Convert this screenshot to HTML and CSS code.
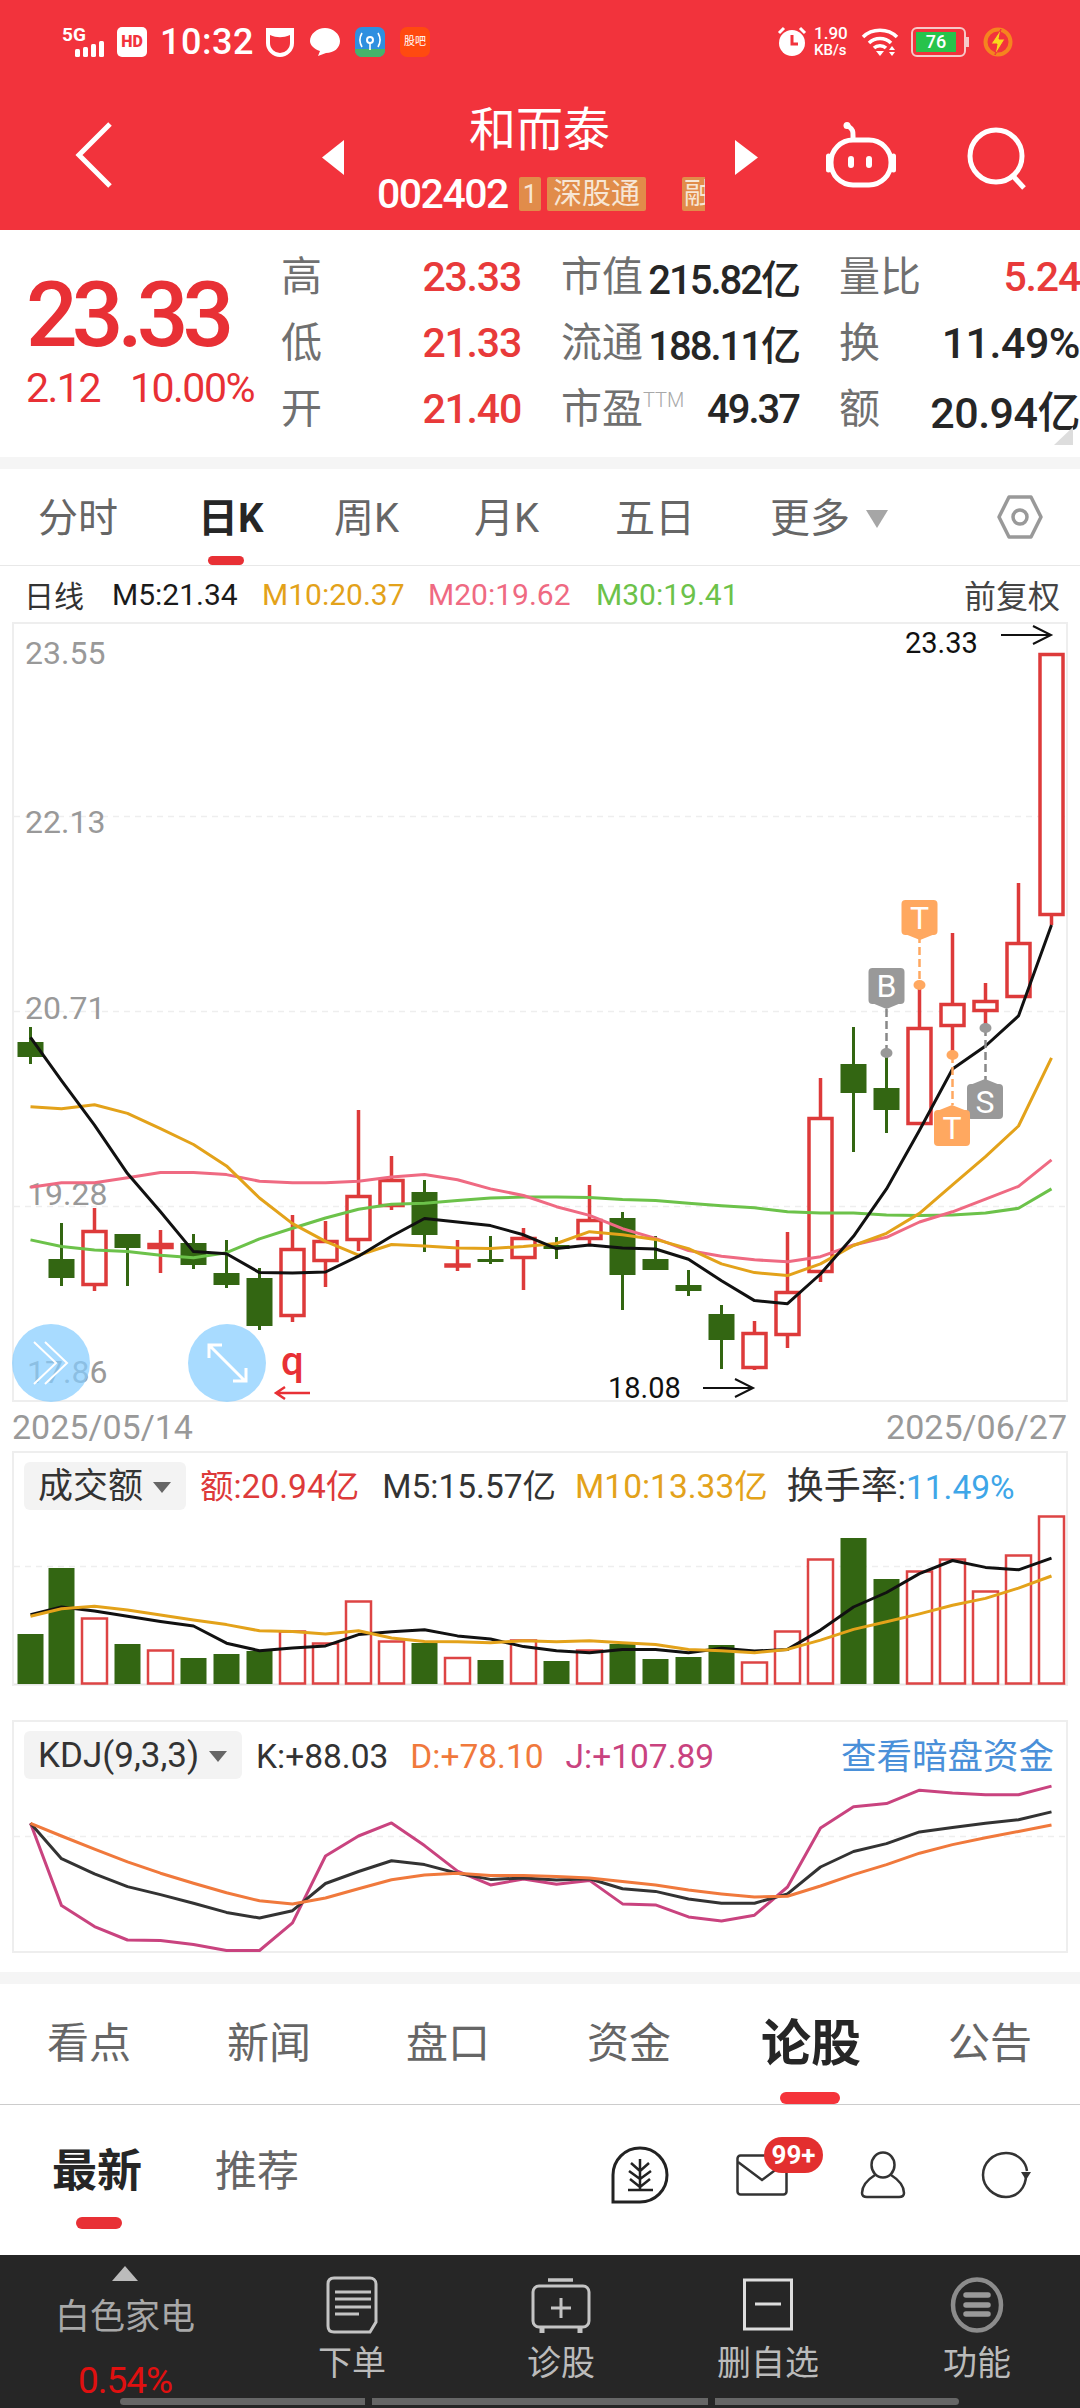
FILE: index.html
```html
<!DOCTYPE html>
<html lang="zh-CN">
<head>
    <meta charset="UTF-8">
    <meta name="viewport" content="width=device-width, initial-scale=1.0">
    <title>和而泰 002402</title>
    <link rel="stylesheet" href="styles.css">
</head>
<body>
    <div id="page">
        <!-- red header -->
        <header class="header">
            <div class="status-bar">
                <svg class="st-signal" width="48" height="30" viewBox="0 0 48 30">
                    <text x="0" y="14" class="st-5g">5G</text>
                    <rect x="13" y="22" width="5" height="8" rx="1.5" fill="#fff"/>
                    <rect x="21" y="20" width="5" height="10" rx="1.5" fill="#fff"/>
                    <rect x="29" y="17" width="5" height="13" rx="1.5" fill="#fff"/>
                    <rect x="37" y="14" width="5" height="16" rx="1.5" fill="#fff"/>
                </svg>
                <span class="st-hd">HD</span>
                <span class="st-time">10:32</span>
                <svg class="st-icon" width="30" height="30" viewBox="0 0 30 30">
                    <path d="M3 3H27V16C27 23 21 28 15 28S3 23 3 16Z" fill="none" stroke="#fff" stroke-width="4"/>
                    <path d="M5 5H25V8C18 11 12 11 5 8Z" fill="#fff"/>
                </svg>
                <svg class="st-icon" width="30" height="30" viewBox="0 0 30 30">
                    <path d="M15 1C23 1 30 7 30 14S24 26 16 26L8 29L10 24C4 22 0 18 0 14C0 7 7 1 15 1Z" fill="#fff"/>
                </svg>
                <svg class="st-icon" width="30" height="30" viewBox="0 0 30 30">
                    <rect width="30" height="30" rx="7" fill="#2f8fe0"/>
                    <path d="M0 22H30V23C30 27 27 30 23 30H7C3 30 0 27 0 23Z" fill="#45b46a"/>
                    <circle cx="15" cy="13" r="3" fill="none" stroke="#fff" stroke-width="2"/>
                    <path d="M15 16V23M7 6C4 11 4 15 7 20M23 6C26 11 26 15 23 20" fill="none" stroke="#fff" stroke-width="1.6"/>
                </svg>
                <span class="st-guba">股吧</span>
                <svg class="st-icon st-alarm" width="30" height="30" viewBox="0 0 30 30">
                    <circle cx="15" cy="16" r="13" fill="#fff"/>
                    <path d="M2 6L7 1M28 6L23 1" stroke="#fff" stroke-width="3"/>
                    <path d="M15 8V17H21" fill="none" stroke="#f2333c" stroke-width="3"/>
                </svg>
                <div class="st-speed"><span>1.90</span><span>KB/s</span></div>
                <svg class="st-wifi" width="38" height="28" viewBox="0 0 38 28">
                    <path d="M2 9C11 0 27 0 36 9M8 15C14 9 24 9 30 15M13 20C16 17 22 17 25 20" fill="none" stroke="#fff" stroke-width="3.5"/>
                    <path d="M19 28L15 23H23Z" fill="#fff"/>
                    <path d="M31 18L34 22H28ZM31 28L28 24H34Z" fill="#fff"/>
                </svg>
                <div class="st-battery"><span class="st-battery-fill">76</span></div>
                <svg class="st-icon st-bolt" width="30" height="30" viewBox="0 0 30 30">
                    <circle cx="15" cy="15" r="12.5" fill="none" stroke="#f5841f" stroke-width="4"/>
                    <path d="M18 2L8 17H14L12 28L22 12H16Z" fill="#f9d71c" stroke="#f2333c" stroke-width="1"/>
                </svg>
            </div>
            <div class="nav-row">
                <svg class="nav-back" width="37" height="66" viewBox="0 0 37 66">
                    <path d="M34 2L3 33L34 64" fill="none" stroke="#fff" stroke-width="5"/>
                </svg>
                <div class="nav-mid">
                    <svg class="nav-tri" width="22" height="35" viewBox="0 0 22 35"><path d="M22 0V35L0 17.5Z" fill="#fff"/></svg>
                    <div class="nav-title">
                        <div class="stock-name">和而泰</div>
                        <div class="stock-code-row">
                            <span class="stock-code">002402</span>
                            <span class="code-tag tag-one">1</span>
                            <span class="code-tag tag-sz">深股通</span>
                            <span class="code-tag tag-cut">融</span>
                        </div>
                    </div>
                    <svg class="nav-tri" width="23" height="35" viewBox="0 0 23 35"><path d="M0 0V35L23 17.5Z" fill="#fff"/></svg>
                </div>
                <svg class="nav-robot" width="70" height="66" viewBox="0 0 70 66">
                    <path d="M27 17C27 10 28 8 22 4" fill="none" stroke="#fff" stroke-width="5"/>
                    <circle cx="21" cy="3.5" r="3.5" fill="#fff"/>
                    <rect x="5" y="18" width="60" height="45" rx="22" fill="none" stroke="#fff" stroke-width="5"/>
                    <path d="M2.500 34V48M67.500 34V48" stroke="#fff" stroke-width="5" stroke-linecap="round"/>
                    <path d="M25 37V43M43 37V43" stroke="#fff" stroke-width="6" stroke-linecap="round"/>
                </svg>
                <svg class="nav-search" width="60" height="62" viewBox="0 0 60 62">
                    <ellipse cx="29" cy="29" rx="26" ry="26" fill="none" stroke="#fff" stroke-width="5"/>
                    <path d="M46 49L57 61" stroke="#fff" stroke-width="5"/>
                </svg>
            </div>
        </header>

        <!-- price block -->
        <section class="quote">
            <div class="quote-main">
                <div class="price">23.33</div>
                <div class="price-change"><span>2.12</span><span>10.00%</span></div>
            </div>
            <div class="quote-grid">
                <div class="cell"><span class="lbl">高</span><span class="val red">23.33</span></div>
                <div class="cell"><span class="lbl">市值</span><span class="val">215.82亿</span></div>
                <div class="cell"><span class="lbl">量比</span><span class="val red">5.24</span></div>
                <div class="cell"><span class="lbl">低</span><span class="val red">21.33</span></div>
                <div class="cell"><span class="lbl">流通</span><span class="val">188.11亿</span></div>
                <div class="cell"><span class="lbl">换</span><span class="val wide">11.49%</span></div>
                <div class="cell"><span class="lbl">开</span><span class="val red">21.40</span></div>
                <div class="cell"><span class="lbl">市盈<sup class="ttm">TTM</sup></span><span class="val">49.37</span></div>
                <div class="cell"><span class="lbl">额</span><span class="val wide">20.94亿</span></div>
            </div>
            <span class="quote-corner"></span>
        </section>
        <div class="band band-top"></div>

        <!-- period tabs -->
        <nav class="period-tabs">
            <span class="period">分时</span>
            <span class="period active">日K</span>
            <span class="period">周K</span>
            <span class="period">月K</span>
            <span class="period">五日</span>
            <span class="period">更多<i class="more-tri"></i></span>
            <svg class="hex" width="46" height="46" viewBox="0 0 46 46">
                <path d="M12 3H34L44 23L34 43H12L2 23Z" fill="none" stroke="#999" stroke-width="3.500" stroke-linejoin="round"/>
                <circle cx="23" cy="23" r="7" fill="none" stroke="#999" stroke-width="3.500"/>
            </svg>
        </nav>
        <div class="ma-legend">
            <span class="ma-name">日线</span>
            <span class="ma-black">M5:21.34</span>
            <span class="ma-orange">M10:20.37</span>
            <span class="ma-pink">M20:19.62</span>
            <span class="ma-green">M30:19.41</span>
            <span class="ma-adjust">前复权</span>
        </div>

        <!-- k line -->
        <svg class="chart-main" width="1080" height="780" viewBox="0 622 1080 780">
            <rect x="13" y="623" width="1054" height="778" class="frame"/>
            <path d="M14 816.500H1066M14 1011.500H1066M14 1206.500H1066" class="grid-line"/>
            <text x="25" y="664" class="axis">23.55</text>
            <text x="25" y="833" class="axis">22.13</text>
            <text x="25" y="1019" class="axis">20.71</text>
            <text x="27" y="1205" class="axis">19.28</text>
            <text x="27" y="1383" class="axis">17.86</text>

            <g class="k-down">
                <path d="M30.500 1027V1064M61.500 1223V1286M127.500 1234V1286M193.500 1234V1269M226.500 1240V1288M259.500 1268V1330M424.500 1180V1252M490.500 1236V1264M556.500 1237V1259M622.500 1212V1310M655.500 1236V1270M688.500 1270V1296M721.500 1305V1369M853.500 1027V1152M886.500 1053V1133"/>
                <rect x="17.500" y="1042" width="26" height="15"/>
                <rect x="48.500" y="1259" width="26" height="19"/>
                <rect x="114.500" y="1234" width="26" height="14"/>
                <rect x="180.500" y="1243" width="26" height="22"/>
                <rect x="213.500" y="1273" width="26" height="12"/>
                <rect x="246.500" y="1278" width="26" height="48"/>
                <rect x="411.500" y="1192" width="26" height="43"/>
                <rect x="477.500" y="1259" width="26" height="3"/>
                <rect x="543.500" y="1245" width="26" height="4"/>
                <rect x="609.500" y="1218" width="26" height="57"/>
                <rect x="642.500" y="1259" width="26" height="11"/>
                <rect x="675.500" y="1285" width="26" height="6"/>
                <rect x="708.500" y="1314" width="26" height="26"/>
                <rect x="840.500" y="1064" width="26" height="29"/>
                <rect x="873.500" y="1088" width="26" height="22"/>
            </g>
            <g class="k-up">
                <path d="M94.500 1208V1291M160.500 1230V1273M292.500 1215V1322M325.500 1221V1287M358.500 1110V1251M391.500 1156V1210M457.500 1240V1271M523.500 1228V1290M589.500 1185V1245M754.500 1321V1370M787.500 1232V1348M820.500 1078V1282M919.500 985V1125M952.500 933V1056M985.500 983V1028M1018.500 883V998M1051.500 653V925"/>
                <rect x="83" y="1231.500" width="23" height="53"/>
                <rect x="149" y="1244.500" width="23" height="3"/>
                <rect x="281" y="1249.500" width="23" height="66"/>
                <rect x="314" y="1241.500" width="23" height="19"/>
                <rect x="347" y="1196.500" width="23" height="43"/>
                <rect x="380" y="1180.500" width="23" height="25"/>
                <rect x="446" y="1265" width="23" height="1"/>
                <rect x="512" y="1238.500" width="23" height="19"/>
                <rect x="578" y="1220.500" width="23" height="18"/>
                <rect x="743" y="1333.500" width="23" height="34"/>
                <rect x="776" y="1292.500" width="23" height="42"/>
                <rect x="809" y="1118.500" width="23" height="153"/>
                <rect x="908" y="1028.500" width="23" height="95"/>
                <rect x="941" y="1004.500" width="23" height="21"/>
                <rect x="974" y="1001.500" width="23" height="9"/>
                <rect x="1007" y="943.500" width="23" height="53"/>
                <rect x="1040" y="654.500" width="23" height="260"/>
            </g>

            <polyline class="line l-green" points="30.500,1239.900 61.500,1246.500 94.500,1250.100 127.500,1251.600 160.500,1255.200 193.500,1257.800 226.500,1252.700 259.500,1238.900 292.500,1228.200 325.500,1218 358.500,1209.300 391.500,1204.200 424.500,1203.200 457.500,1200.600 490.500,1198 523.500,1197 556.500,1197 589.500,1197.600 622.500,1199.600 655.500,1200.600 688.500,1203.200 721.500,1205.700 754.500,1207.800 787.500,1211.800 820.500,1212.900 853.500,1212.900 886.500,1214.900 919.500,1215.400 952.500,1214.900 985.500,1212.900 1018.500,1208.300 1051.500,1188.900"/>
            <polyline class="line l-pink" points="30.500,1187.300 61.500,1182.800 94.500,1182.800 127.500,1177.700 160.500,1172.600 193.500,1172.600 226.500,1174.600 259.500,1181.200 292.500,1182.800 325.500,1182.800 358.500,1181.200 391.500,1177.100 424.500,1174.600 457.500,1179.700 490.500,1188.900 523.500,1195.500 556.500,1206.700 589.500,1215.400 622.500,1228.700 655.500,1238.400 688.500,1250.600 721.500,1256.200 754.500,1259.800 787.500,1261.800 820.500,1256.700 853.500,1245 886.500,1237.300 919.500,1222 952.500,1211.800 985.500,1199.100 1018.500,1186.300 1051.500,1159.800"/>
            <polyline class="line l-orange" points="30.500,1106.700 61.500,1108.800 94.500,1104.700 127.500,1113.400 160.500,1128.700 193.500,1144.500 226.500,1165.900 259.500,1198 292.500,1223.600 325.500,1241.400 358.500,1255.200 391.500,1244.500 424.500,1246 457.500,1248 490.500,1248.600 523.500,1246.500 556.500,1243.500 589.500,1231.700 622.500,1234.800 655.500,1239.400 688.500,1248.600 721.500,1263.900 754.500,1272.600 787.500,1275.600 820.500,1263.900 853.500,1245.500 886.500,1233.300 919.500,1213.400 952.500,1184.800 985.500,1156.700 1018.500,1126 1051.500,1057.800"/>
            <polyline class="line l-black" points="30.500,1037.300 61.500,1080.700 94.500,1125.100 127.500,1173.600 160.500,1211.800 193.500,1251.600 226.500,1253.700 259.500,1272.600 292.500,1273 325.500,1272 358.500,1256.200 391.500,1236.300 424.500,1218.500 457.500,1222 490.500,1225.600 523.500,1234.800 556.500,1248.600 589.500,1245 622.500,1248 655.500,1249 688.500,1259.300 721.500,1280.700 754.500,1300.600 787.500,1303.700 820.500,1274 853.500,1236.300 886.500,1188.900 919.500,1130.200 952.500,1069 985.500,1046 1018.500,1015.900 1051.500,925.100"/>

            <!-- trade markers -->
            <path d="M886.500 1009V1053M985.500 1028V1084" class="mark-dash-gray"/>
            <path d="M919.500 935V985M952.500 1055V1105" class="mark-dash-orange"/>
            <ellipse cx="886.500" cy="1053" rx="6" ry="5" class="mark-gray"/>
            <ellipse cx="985.500" cy="1028" rx="6" ry="5" class="mark-gray"/>
            <ellipse cx="919.500" cy="985" rx="6" ry="5" class="mark-orange"/>
            <ellipse cx="952.500" cy="1055" rx="6" ry="5" class="mark-orange"/>
            <path d="M872 1003H901L886.500 1009Z" class="mark-gray"/>
            <rect x="868.500" y="968" width="36" height="36" rx="4" class="mark-gray"/>
            <text x="886.500" y="997" class="mark-text">B</text>
            <path d="M905 934H935L920 940Z" class="mark-orange"/>
            <rect x="901.500" y="900" width="36" height="35" rx="4" class="mark-orange"/>
            <text x="919.500" y="929" class="mark-text">T</text>
            <path d="M970 1085H1000L985 1079Z" class="mark-gray"/>
            <rect x="967" y="1084" width="36" height="35" rx="4" class="mark-gray"/>
            <text x="985" y="1113" class="mark-text">S</text>
            <path d="M937 1111H967L952 1105Z" class="mark-orange"/>
            <rect x="934" y="1110" width="36" height="36" rx="4" class="mark-orange"/>
            <text x="952" y="1139" class="mark-text">T</text>

            <!-- high / low notes -->
            <text x="905" y="653" class="note">23.33</text>
            <path d="M1001 635H1051M1033 626L1051 635L1033 644" class="note-arrow"/>
            <text x="608" y="1398" class="note">18.08</text>
            <path d="M703 1388H753M735 1379L753 1388L735 1397" class="note-arrow"/>

            <!-- floating buttons -->
            <circle cx="51" cy="1363" r="39" class="float-btn"/>
            <path d="M34 1342L56 1363L34 1384M45 1342L67 1363L45 1384" class="float-stroke thin"/>
            <circle cx="227" cy="1363" r="39" class="float-btn"/>
            <path d="M210 1346L245 1381M209 1358V1345H222M246 1368V1381H233" class="float-stroke"/>
            <text x="281" y="1375" class="q-mark">q</text>
            <path d="M310 1393H276M285 1387L276 1393L285 1399" class="q-arrow"/>
        </svg>

        <div class="date-row"><span>2025/05/14</span><span>2025/06/27</span></div>

        <!-- volume -->
        <section class="sub-panel vol-panel">
            <div class="sub-head">
                <span class="pill pill-vol">成交额<i class="pill-tri"></i></span>
                <span class="t-red">额:20.94亿</span>
                <span class="t-dark">M5:15.57亿</span>
                <span class="t-orange vol-m10">M10:13.33亿</span>
                <span class="t-dark vol-turn"><em class="head-cjk">换手率</em>:<b class="t-blue">11.49%</b></span>
            </div>
            <svg class="vol-svg" width="1052" height="173" viewBox="14 1513 1052 173">
                <path d="M14 1566.500H1066" class="grid-line"/>
                <path d="M14 1684.500H1066" class="base-line"/>
                <g class="v-down">
                    <rect x="17.500" y="1634" width="26" height="50"/>
                    <rect x="48.500" y="1568" width="26" height="116"/>
                    <rect x="114.500" y="1644" width="26" height="40"/>
                    <rect x="180.500" y="1658" width="26" height="26"/>
                    <rect x="213.500" y="1654" width="26" height="30"/>
                    <rect x="246.500" y="1651" width="26" height="33"/>
                    <rect x="411.500" y="1643" width="26" height="41"/>
                    <rect x="477.500" y="1660" width="26" height="24"/>
                    <rect x="543.500" y="1661" width="26" height="23"/>
                    <rect x="609.500" y="1644" width="26" height="40"/>
                    <rect x="642.500" y="1659" width="26" height="25"/>
                    <rect x="675.500" y="1657" width="26" height="27"/>
                    <rect x="708.500" y="1645" width="26" height="39"/>
                    <rect x="840.500" y="1538" width="26" height="146"/>
                    <rect x="873.500" y="1579" width="26" height="105"/>
                </g>
                <g class="v-up">
                    <rect x="82" y="1618.500" width="25" height="65"/>
                    <rect x="148" y="1650.500" width="25" height="33"/>
                    <rect x="280" y="1631.500" width="25" height="52"/>
                    <rect x="313" y="1643.500" width="25" height="40"/>
                    <rect x="346" y="1601.500" width="25" height="82"/>
                    <rect x="379" y="1641.500" width="25" height="42"/>
                    <rect x="445" y="1658" width="25" height="25.500"/>
                    <rect x="511" y="1640.500" width="25" height="43"/>
                    <rect x="577" y="1650.500" width="25" height="33"/>
                    <rect x="742" y="1662.500" width="25" height="21"/>
                    <rect x="775" y="1631.500" width="25" height="52"/>
                    <rect x="808" y="1559.500" width="25" height="124"/>
                    <rect x="907" y="1571.500" width="25" height="112"/>
                    <rect x="940" y="1559.500" width="25" height="124"/>
                    <rect x="973" y="1591.500" width="25" height="92"/>
                    <rect x="1006" y="1555.500" width="25" height="128"/>
                    <rect x="1039" y="1516.500" width="25" height="167"/>
                </g>
                <polyline class="line l-black" points="30.500,1614.600 61.500,1607 94.500,1611.100 127.500,1616.300 160.500,1621.500 193.500,1626 226.500,1643.200 259.500,1650.700 292.500,1648 325.500,1645.900 358.500,1634.600 391.500,1631.800 424.500,1629.700 457.500,1635.900 490.500,1639 523.500,1646.600 556.500,1650.700 589.500,1652.800 622.500,1649.400 655.500,1649.400 688.500,1652.800 721.500,1648.300 754.500,1651.100 787.500,1649.400 820.500,1630.100 853.500,1607 886.500,1592.500 919.500,1573.600 952.500,1560.500 985.500,1567.400 1018.500,1569.800 1051.500,1558.100"/>
                <polyline class="line l-orange" points="30.500,1616.300 61.500,1608.700 94.500,1606.300 127.500,1610.100 160.500,1614.900 193.500,1620.100 226.500,1624.600 259.500,1630.800 292.500,1631.500 325.500,1633.900 358.500,1630.800 391.500,1638 424.500,1641.400 457.500,1641.800 490.500,1642.800 523.500,1640.800 556.500,1641.800 589.500,1640.800 622.500,1642.800 655.500,1644.500 688.500,1649.400 721.500,1650.700 754.500,1652.800 787.500,1649.400 820.500,1640.100 853.500,1629.400 886.500,1621.800 919.500,1613.900 952.500,1605.300 985.500,1598.400 1018.500,1588.100 1051.500,1576"/>
            </svg>
        </section>

        <!-- kdj -->
        <section class="sub-panel kdj-panel">
            <div class="sub-head">
                <span class="pill pill-kdj">KDJ(9,3,3)<i class="pill-tri"></i></span>
                <span class="t-dark">K:+88.03</span>
                <span class="t-coral">D:+78.10</span>
                <span class="t-magenta">J:+107.89</span>
                <span class="t-link">查看暗盘资金</span>
            </div>
            <svg class="kdj-svg" width="1052" height="169" viewBox="14 1782 1052 169">
                <path d="M14 1836.500H1066" class="grid-line"/>
                <polyline class="line l-magenta" points="30.500,1823.300 61.500,1905.600 94.500,1926.600 127.500,1940 160.500,1940.400 193.500,1944.500 226.500,1950.500 259.500,1950.500 292.500,1922.800 325.500,1856 358.500,1836 391.500,1822.900 424.500,1845.600 457.500,1871.100 490.500,1884.900 523.500,1879 556.500,1884.200 589.500,1880.400 622.500,1903.900 655.500,1904.900 688.500,1916.900 721.500,1921 754.500,1915.200 787.500,1887 820.500,1828.100 853.500,1806.700 886.500,1803.600 919.500,1790.200 952.500,1793 985.500,1794.700 1018.500,1794.700 1051.500,1786.100"/>
                <polyline class="line l-kline" points="30.500,1823.300 61.500,1858.700 94.500,1873.900 127.500,1886.600 160.500,1894.600 193.500,1903.200 226.500,1912.400 259.500,1918 292.500,1910.700 325.500,1883.500 358.500,1871.500 391.500,1860.800 424.500,1864.600 457.500,1873.200 490.500,1879.400 523.500,1878 556.500,1880.100 589.500,1878.700 622.500,1888.700 655.500,1891.400 688.500,1899 721.500,1903.200 754.500,1903.200 787.500,1893.900 820.500,1867 853.500,1851.500 886.500,1843.600 919.500,1831.900 952.500,1827.400 985.500,1823.300 1018.500,1819.800 1051.500,1811.900"/>
                <polyline class="line l-coral" points="30.500,1823.300 61.500,1836 94.500,1849.100 127.500,1861.800 160.500,1873.200 193.500,1883.200 226.500,1892.800 259.500,1900.800 292.500,1903.900 325.500,1898 358.500,1888.700 391.500,1879.700 424.500,1874.900 457.500,1873.200 490.500,1875.600 523.500,1875.600 556.500,1876.600 589.500,1878 622.500,1881.500 655.500,1884.900 688.500,1890.100 721.500,1893.900 754.500,1897 787.500,1896.300 820.500,1886 853.500,1874.600 886.500,1864.600 919.500,1853.200 952.500,1844.600 985.500,1837.700 1018.500,1831.500 1051.500,1825"/>
            </svg>
        </section>
        <div class="band band-mid"></div>

        <!-- news tabs -->
        <nav class="news-tabs">
            <span>看点</span>
            <span>新闻</span>
            <span>盘口</span>
            <span>资金</span>
            <span class="active">论股</span>
            <span>公告</span>
        </nav>
        <div class="feed-row">
            <span class="feed-tab active">最新</span>
            <span class="feed-tab">推荐</span>
            <svg class="feed-leaf" width="58" height="58" viewBox="0 0 58 58">
                <path d="M2 56V29C2 14 14 2 29 2S56 14 56 29S44 56 29 56Z" fill="none" stroke="#222" stroke-width="3"/>
                <path d="M29 13V44M17 44H42M29 25L20 17M29 25L38 17M29 33L18 25M29 33L40 25M29 41L19 33M29 41L39 33" fill="none" stroke="#222" stroke-width="2.500"/>
            </svg>
            <div class="feed-mail">
                <svg width="52" height="42" viewBox="0 0 52 42">
                    <rect x="1.500" y="1.500" width="49" height="39" rx="3" fill="none" stroke="#333" stroke-width="2.500"/>
                    <path d="M2 8L26 26L50 8" fill="none" stroke="#333" stroke-width="2.500"/>
                </svg>
                <span class="mail-badge">99+</span>
            </div>
            <svg class="feed-user" width="46" height="48" viewBox="0 0 46 48">
                <ellipse cx="23" cy="14" rx="11.500" ry="12.500" fill="none" stroke="#333" stroke-width="2.500"/>
                <path d="M15 24C7 29 2 36 2 42C2 45 4 46 7 46H39C42 46 44 45 44 42C44 36 39 29 31 24" fill="none" stroke="#333" stroke-width="2.500"/>
            </svg>
            <svg class="feed-refresh" width="52" height="48" viewBox="0 0 52 48">
                <path d="M46 24C46 36 38 46 26 46S3 36 3 24S13 2 26 2C38 2 46 11 47 20" fill="none" stroke="#333" stroke-width="2.500"/>
                <path d="M41 21H51L46 29Z" fill="#333"/>
            </svg>
        </div>

        <!-- dark bottom bar -->
        <footer class="bottom-bar">
            <div class="bar-items">
                <div class="bar-sector">
                    <i class="sector-tri"></i>
                    <span class="sector-name">白色家电</span>
                    <span class="sector-pct">0.54%</span>
                </div>
                <div class="bar-item">
                    <svg width="52" height="58" viewBox="0 0 52 58">
                        <path d="M8 2H44C47 2 50 4 50 8V46L44 56H8C4 56 2 54 2 50V8C2 4 4 2 8 2Z" fill="none" stroke="#c4c4c4" stroke-width="3"/>
                        <path d="M9 16H45M9 23H45M9 31H45M9 38H33" stroke="#c4c4c4" stroke-width="3"/>
                    </svg>
                    <span>下单</span>
                </div>
                <div class="bar-item">
                    <svg width="60" height="58" viewBox="0 0 60 58">
                        <path d="M17 4H42" stroke="#c4c4c4" stroke-width="3.500"/>
                        <rect x="2" y="10" width="56" height="41" rx="6" fill="none" stroke="#c4c4c4" stroke-width="3"/>
                        <path d="M30 22V42M20 32H40" stroke="#c4c4c4" stroke-width="3"/>
                        <path d="M11 51V57M49 51V57" stroke="#c4c4c4" stroke-width="5"/>
                    </svg>
                    <span>诊股</span>
                </div>
                <div class="bar-item">
                    <svg width="50" height="58" viewBox="0 0 50 58">
                        <rect x="1.500" y="4" width="47" height="49" fill="none" stroke="#ddd" stroke-width="3"/>
                        <path d="M12 28H38" stroke="#ddd" stroke-width="3"/>
                    </svg>
                    <span>删自选</span>
                </div>
                <div class="bar-item">
                    <svg width="54" height="58" viewBox="0 0 54 58">
                        <ellipse cx="27" cy="29" rx="24" ry="25.500" fill="none" stroke="#8c8c8c" stroke-width="4.500"/>
                        <path d="M16 19H38M16 29H38M16 38H38" stroke="#9a9a9a" stroke-width="5.500" stroke-linecap="round"/>
                    </svg>
                    <span>功能</span>
                </div>
            </div>
            <div class="bar-scroll">
                <i class="seg seg-first"></i>
                <i class="seg"></i>
                <i class="seg seg-last"></i>
            </div>
        </footer>
    </div>
</body>
</html>
```

FILE: styles.css
```css
* {
    box-sizing: border-box;
}
html, body {
    margin: 0;
    padding: 0;
    background-color: #ffffff;
}
body {
    font-family: Roboto, "Noto Sans CJK SC", sans-serif;
    color: #333333;
}
#page {
    width: 1080px;
    height: 2408px;
    overflow: hidden;
}
svg {
    display: block;
    flex-shrink: 0;
    overflow: visible;
}
i, em {
    display: block;
    font-style: normal;
}

/* header */
.header {
    height: 230px;
    background-color: #f2333c;
    color: #ffffff;
}
.status-bar {
    display: flex;
    align-items: center;
    height: 84px;
    padding-left: 62px;
}
.st-signal {
    margin-right: 7px;
}
.st-5g {
    font-size: 19px;
    font-weight: 700;
    fill: #ffffff;
}
.st-hd {
    width: 30px;
    height: 30px;
    border-radius: 5px;
    background-color: #ffffff;
    color: #f2333c;
    font-size: 16px;
    font-weight: 900;
    line-height: 30px;
    text-align: center;
}
.st-time {
    width: 92px;
    margin: 0 13px;
    font-size: 36px;
    font-weight: 500;
    line-height: 40px;
    letter-spacing: 0.5px;
}
.st-icon {
    margin-right: 15px;
}
.st-guba {
    width: 30px;
    height: 30px;
    border-radius: 7px;
    background-color: #ff4a10;
    font-size: 11px;
    line-height: 30px;
    text-align: center;
}
.st-alarm {
    margin-left: 347px;
    margin-right: 7px;
}
.st-speed {
    display: flex;
    flex-direction: column;
    width: 38px;
    font-size: 17px;
    font-weight: 500;
    line-height: 17px;
    white-space: nowrap;
}
.st-speed span:last-child {
    font-size: 15px;
}
.st-wifi {
    margin: 0 12px 0 9px;
}
.st-battery {
    position: relative;
    width: 55px;
    height: 30px;
    padding: 3px;
    border: 2px solid #f6c9c9;
    border-radius: 6px;
    background-color: #f2333c;
    margin-right: 17px;
}
.st-battery::after {
    content: "";
    position: absolute;
    right: -5px;
    top: 8px;
    width: 3px;
    height: 10px;
    background-color: #f6c9c9;
}
.st-battery-fill {
    display: block;
    width: 40px;
    height: 20px;
    background-color: #27c34b;
    font-size: 18px;
    font-weight: 500;
    line-height: 20px;
    text-align: center;
}
.st-bolt {
    margin-right: 0;
}
.nav-row {
    display: flex;
    align-items: flex-start;
    height: 146px;
    padding-left: 76px;
}
.nav-back {
    margin-top: 38px;
}
.nav-mid {
    display: flex;
    align-items: flex-start;
    width: 436px;
    margin-left: 209px;
}
.nav-tri {
    margin-top: 56px;
}
.nav-title {
    width: 391px;
    padding-top: 18px;
}
.stock-name {
    font-size: 47px;
    line-height: 56px;
    text-align: center;
}
.stock-code-row {
    display: flex;
    align-items: center;
    height: 34px;
    margin-top: 19px;
    margin-left: 33px;
    width: 328px;
    overflow: hidden;
    white-space: nowrap;
}
.stock-code {
    flex-shrink: 0;
    width: 142px;
    font-size: 41px;
    font-weight: 500;
    line-height: 34px;
    letter-spacing: -1.500px;
}
.code-tag {
    flex-shrink: 0;
    height: 34px;
    background-color: #e18c4a;
    color: #f7e6d5;
    font-size: 29px;
    line-height: 34px;
    border-radius: 2px;
    text-align: center;
    overflow: hidden;
}
.tag-one {
    width: 22px;
    font-size: 26px;
}
.tag-sz {
    width: 99px;
    margin-left: 6px;
}
.tag-cut {
    width: 40px;
    margin-left: 36px;
    padding-left: 2px;
    text-align: left;
}
.nav-robot {
    margin-top: 38px;
    margin-left: 68px;
}
.nav-search {
    margin-top: 43px;
    margin-left: 71px;
}

/* quote */
.quote {
    position: relative;
    display: flex;
    height: 227px;
    padding-top: 14px;
}
.quote-main {
    width: 281px;
    padding: 26px 0 0 26px;
    color: #e83035;
}
.price {
    font-size: 91px;
    font-weight: 500;
    line-height: 90px;
    letter-spacing: -6px;
}
.price-change {
    display: flex;
    gap: 30px;
    margin-top: 6px;
    font-size: 41px;
    line-height: 44px;
    letter-spacing: -1.500px;
}
.quote-grid {
    display: grid;
    grid-template-columns: 240px 238px 241px;
    grid-auto-rows: 66px;
    column-gap: 40px;
}
.cell {
    display: flex;
    align-items: center;
    justify-content: space-between;
    white-space: nowrap;
}
.lbl {
    color: #707070;
    font-size: 41px;
    line-height: 66px;
}
.val {
    color: #262626;
    font-size: 40px;
    font-weight: 500;
    letter-spacing: -2px;
}
.val.red {
    color: #e83a3a;
    font-size: 41px;
    letter-spacing: -1.200px;
}
.val.wide {
    font-size: 43px;
    letter-spacing: -0.500px;
}
.ttm {
    font-size: 20px;
    line-height: 0;
    font-weight: 300;
    color: #a8a8a8;
    vertical-align: 16px;
}
.quote-corner {
    position: absolute;
    right: 7px;
    top: 197px;
    width: 0;
    height: 0;
    border-left: 19px solid transparent;
    border-bottom: 18px solid #dddddd;
}
.band {
    background-color: #f5f5f5;
}
.band-top {
    height: 12px;
}

/* period tabs */
.period-tabs {
    display: grid;
    grid-template-columns: 160px 136px 140px 141px 155px 227px 46px;
    align-items: center;
    height: 97px;
    padding-top: 4px;
    padding-left: 38px;
    border-bottom: 1px solid #e8e8e8;
    color: #666666;
    font-size: 40px;
}
.period {
    position: relative;
    display: flex;
    align-items: center;
    line-height: 92px;
}
.period.active {
    color: #262626;
    font-weight: 700;
}
.period.active::after {
    content: "";
    position: absolute;
    left: 10px;
    bottom: 0;
    width: 36px;
    height: 9px;
    border-radius: 5px;
    background-color: #e83035;
}
.more-tri {
    width: 0;
    height: 0;
    margin-left: 16px;
    border-left: 11px solid transparent;
    border-right: 11px solid transparent;
    border-top: 18px solid #a6a6a6;
}
.hex {
    margin-top: -4px;
}
.ma-legend {
    display: grid;
    grid-template-columns: 88px 150px 166px 168px 368px 96px;
    align-items: center;
    height: 56px;
    padding-left: 24px;
    font-size: 30px;
    white-space: nowrap;
}
.ma-name {
    color: #333333;
}
.ma-black {
    color: #1a1a1a;
}
.ma-orange {
    color: #e3a21a;
}
.ma-pink {
    color: #ef6a82;
}
.ma-green {
    color: #6cc24a;
}
.ma-adjust {
    color: #444444;
    font-size: 32px;
}

/* charts */
.frame {
    fill: none;
    stroke: #eeeeee;
    stroke-width: 2;
}
.grid-line {
    fill: none;
    stroke: #eeeeee;
    stroke-width: 1.500;
    stroke-dasharray: 6 5;
}
.base-line {
    stroke: #e6e6e6;
    stroke-width: 2;
}
.axis {
    fill: #999999;
    font-size: 32px;
}
.k-down path {
    fill: none;
    stroke: #336612;
    stroke-width: 3;
}
.k-down rect, .v-down rect {
    fill: #336612;
}
.k-up path {
    fill: none;
    stroke: #dd3a3a;
    stroke-width: 3.500;
}
.k-up rect {
    fill: #ffffff;
    stroke: #dd3a3a;
    stroke-width: 3.500;
}
.v-up rect {
    fill: #ffffff;
    stroke: #dd4444;
    stroke-width: 2.500;
}
.line {
    fill: none;
    stroke-width: 3;
    stroke-linejoin: round;
}
.l-black {
    stroke: #111111;
}
.l-orange {
    stroke: #e3a21a;
}
.l-pink {
    stroke: #ef6a82;
}
.l-green {
    stroke: #6cc24a;
}
.l-kline {
    stroke: #333333;
}
.l-coral {
    stroke: #f0793c;
}
.l-magenta {
    stroke: #c9437f;
}
.mark-gray {
    fill: #999999;
}
.mark-orange {
    fill: #ffa860;
}
.mark-dash-gray {
    stroke: #888888;
    stroke-width: 2.500;
    stroke-dasharray: 8 4;
}
.mark-dash-orange {
    stroke: #ffa860;
    stroke-width: 2.500;
    stroke-dasharray: 8 4;
}
.mark-text {
    fill: #ffffff;
    font-size: 32px;
    text-anchor: middle;
}
.note {
    fill: #111111;
    font-size: 29px;
}
.note-arrow {
    fill: none;
    stroke: #111111;
    stroke-width: 2;
}
.float-btn {
    fill: rgba(135, 205, 255, 0.72);
}
.float-stroke {
    fill: none;
    stroke: #ffffff;
    stroke-width: 3;
}
.float-stroke.thin {
    stroke-width: 2;
}
.q-mark {
    fill: #e83035;
    font-size: 40px;
    font-weight: 500;
}
.q-arrow {
    fill: none;
    stroke: #e83035;
    stroke-width: 2.500;
}
.date-row {
    display: flex;
    justify-content: space-between;
    height: 49px;
    padding: 0 13px 0 12px;
    color: #999999;
    font-size: 34px;
    line-height: 50px;
}

/* sub panels */
.sub-panel {
    width: 1056px;
    margin-left: 12px;
    border: 2px solid #eeeeee;
}
.vol-panel {
    height: 235px;
    border-bottom: none;
}
.kdj-panel {
    height: 233px;
    margin-top: 34px;
}
.sub-head {
    display: flex;
    align-items: flex-start;
    height: 60px;
    padding: 9px 0 0 10px;
    font-size: 33.500px;
    line-height: 50px;
    white-space: nowrap;
}
.kdj-panel .sub-head {
    line-height: 52px;
}
.pill {
    display: flex;
    align-items: center;
    height: 48px;
    padding: 2px 0 0 14px;
    border-radius: 6px;
    background-color: #f3f3f3;
    color: #333333;
    font-size: 35px;
}
.pill-vol {
    width: 162px;
}
.pill-kdj {
    width: 218px;
}
.pill-tri {
    width: 0;
    height: 0;
    margin-left: 10px;
    border-left: 9px solid transparent;
    border-right: 9px solid transparent;
    border-top: 11px solid #666666;
}
.head-cjk {
    display: inline;
    font-size: 37px;
}
.vol-panel .pill + span {
    margin-left: 14px;
}
.vol-panel span + span + span {
    margin-left: 23px;
}
.vol-panel .vol-m10 {
    margin-left: 19px;
}
.vol-panel .vol-turn {
    margin-left: 19px;
}
.kdj-panel .pill + span {
    margin-left: 14px;
}
.kdj-panel span + span + span {
    margin-left: 22px;
}
.t-red {
    color: #dd3a3a;
}
.t-dark {
    color: #333333;
}
.t-orange {
    color: #e3a21a;
}
.t-blue {
    color: #3ea6e8;
    font-weight: 400;
}
.t-coral {
    color: #f0793c;
}
.t-magenta {
    color: #c9437f;
}
.kdj-panel .t-link {
    margin-left: auto;
    margin-right: 12px;
    color: #4a90d9;
    font-size: 35.500px;
}

.band-mid {
    height: 12px;
    margin-top: 19px;
}

/* news tabs */
.news-tabs {
    display: grid;
    grid-template-columns: 180px 179px 181px 174px 187px 84px;
    align-items: center;
    height: 121px;
    padding-left: 47px;
    border-bottom: 1px solid #cccccc;
    color: #666666;
    font-size: 42px;
}
.news-tabs span {
    position: relative;
    line-height: 120px;
}
.news-tabs .active {
    color: #262626;
    font-size: 50px;
    font-weight: 700;
}
.news-tabs .active::after {
    content: "";
    position: absolute;
    left: 19px;
    bottom: 0;
    width: 60px;
    height: 12px;
    border-radius: 6px;
    background-color: #f5333a;
}
.feed-row {
    display: flex;
    align-items: flex-start;
    height: 150px;
    padding-left: 52px;
}
.feed-tab {
    position: relative;
    margin-top: 37px;
    margin-right: 73px;
    color: #666666;
    font-size: 42px;
    line-height: 60px;
}
.feed-tab.active {
    color: #262626;
    font-size: 45px;
    font-weight: 700;
}
.feed-tab.active::after {
    content: "";
    position: absolute;
    left: 24px;
    top: 75px;
    width: 46px;
    height: 12px;
    border-radius: 6px;
    background-color: #e83035;
}
.feed-leaf {
    margin-top: 41px;
    margin-left: 239px;
}
.feed-mail {
    position: relative;
    margin-top: 49px;
    margin-left: 67px;
}
.mail-badge {
    position: absolute;
    left: 28px;
    top: -17px;
    width: 59px;
    height: 36px;
    border-radius: 18px;
    background-color: #e32f2f;
    color: #ffffff;
    font-size: 26px;
    font-weight: 700;
    line-height: 36px;
    text-align: center;
}
.feed-user {
    margin-top: 46px;
    margin-left: 72px;
}
.feed-refresh {
    margin-top: 46px;
    margin-left: 74px;
}

/* bottom bar */
.bottom-bar {
    height: 153px;
    background-color: #262626;
    color: #bbbbbb;
}
.bar-items {
    display: grid;
    grid-template-columns: 244px 216px 202px 212px 206px;
    height: 143px;
}
.bar-sector {
    display: flex;
    flex-direction: column;
    align-items: center;
    padding: 11px 0 0 6px;
}
.sector-tri {
    width: 0;
    height: 0;
    border-left: 13px solid transparent;
    border-right: 13px solid transparent;
    border-bottom: 15px solid #bbbbbb;
}
.sector-name {
    margin-top: 15px;
    color: #a8a8a8;
    font-size: 35px;
    line-height: 44px;
}
.sector-pct {
    margin-top: 26px;
    color: #e01010;
    font-size: 37px;
    line-height: 30px;
    letter-spacing: -1px;
}
.bar-item {
    display: flex;
    flex-direction: column;
    align-items: center;
    padding-top: 21px;
    font-size: 34px;
    line-height: 44px;
}
.bar-item span {
    margin-top: 7px;
}
.bar-scroll {
    display: flex;
    gap: 7px;
    height: 7px;
    padding-left: 120px;
}
.seg {
    width: 336px;
    height: 7px;
    background-color: #666666;
}
.seg-first {
    width: 245px;
    border-radius: 4px 0 0 4px;
}
.seg-last {
    width: 244px;
    border-radius: 0 4px 4px 0;
}
```
